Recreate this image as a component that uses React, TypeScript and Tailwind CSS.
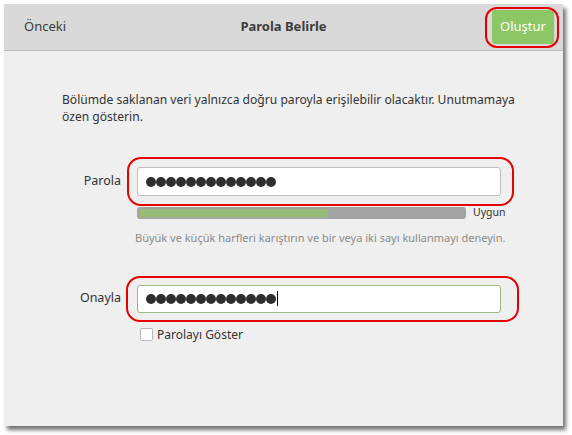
import React from "react";

const font = { fontFamily: '"Noto Sans", "Open Sans", sans-serif' };

function Dots({ count }: { count: number }) {
  return (
    <div className="flex items-center">
      {Array.from({ length: count }).map((_, i) => (
        <div key={i} className="h-[10px] w-[10px] rounded-full bg-[#2e2e2e]" />
      ))}
    </div>
  );
}

export default function App() {
  return (
    <div className="h-[435px] w-[572px] bg-white pl-[4px] pt-[4px]" style={font}>
      <div className="flex h-[422px] w-[559px] flex-col bg-[#efefef] shadow-[3px_4px_4px_rgba(0,0,0,0.55)]">
        {/* header */}
        <div className="relative flex h-[47px] shrink-0 items-center justify-between border-b border-[#bcbcbc] bg-[#d9d9d9] pl-[20px] pr-[9px] text-[13px]">
          <span className="text-[#3c3c3c]">Önceki</span>
          <span className="absolute left-1/2 -translate-x-1/2 font-bold text-[#3c3c3c]">Parola Belirle</span>
          <div className="relative">
            <button className="h-[34px] w-[62px] rounded-[3px] bg-[#8cc665] text-[13px] text-white">Oluştur</button>
            <div className="pointer-events-none absolute -bottom-[4px] -left-[7px] -right-[5px] -top-[3px] rounded-[12px] border-2 border-[#e60000]" />
          </div>
        </div>

        {/* body */}
        <div className="flex flex-col pt-[40px]">
          <p className="ml-[58px] w-[462px] text-[12.1px] leading-[17px] text-[#333]">
            Bölümde saklanan veri yalnızca doğru paroyla erişilebilir olacaktır. Unutmamaya özen gösterin.
          </p>

          <div className="mt-[42px] flex items-center">
            <label className="w-[117px] text-right text-[12.5px] text-[#333]">Parola</label>
            <div className="relative ml-[16px]">
              <div className="flex h-[29px] w-[364px] items-center rounded-[3px] border border-[#c0c0c0] bg-white pl-[8px]">
                <Dots count={13} />
              </div>
              <div className="pointer-events-none absolute -bottom-[10px] -left-[10px] -right-[13px] -top-[10px] rounded-[14px] border-2 border-[#e60000]" />
            </div>
          </div>

          <div className="mt-[9px] flex h-[16px] items-center pl-[133px]">
            <div className="h-[12px] w-[329px] rounded-[3px] bg-[#a3a3a3] p-[2px]">
              <div className="h-full w-[58%] rounded-[1px] bg-[#98bc78]" />
            </div>
            <span className="ml-[7px] text-[10.5px] text-[#333]">Uygun</span>
          </div>

          <p className="mt-[9px] pl-[131px] text-[11px] text-[#8a8a8a]">
            Büyük ve küçük harfleri karıştırın ve bir veya iki sayı kullanmayı deneyin.
          </p>

          <div className="mt-[38px] flex items-center">
            <label className="w-[117px] text-right text-[12.5px] text-[#333]">Onayla</label>
            <div className="relative ml-[16px]">
              <div className="flex h-[28px] w-[364px] items-center rounded-[3px] border border-[#9dbb80] bg-white pl-[8px]">
                <Dots count={13} />
                <div className="ml-[1px] h-[15px] w-[1px] bg-black" />
              </div>
              <div className="pointer-events-none absolute -bottom-[9px] -left-[11px] -right-[18px] -top-[9px] rounded-[14px] border-2 border-[#e60000]" />
            </div>
          </div>

          <label className="mt-[13px] flex items-center pl-[136px] text-[12px] text-[#333]">
            <span className="h-[13px] w-[13px] rounded-[2px] border border-[#b8b8b8] bg-white" />
            <span className="ml-[4px]">Parolayı Göster</span>
          </label>
        </div>
      </div>
    </div>
  );
}
